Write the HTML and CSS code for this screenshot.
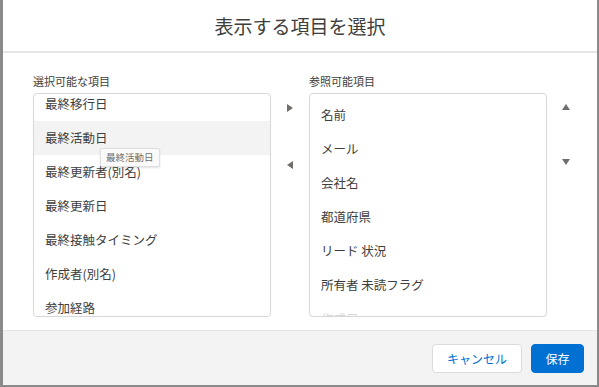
FILE: index.html
```html
<!DOCTYPE html>
<html lang="ja">
<head>
    <meta charset="UTF-8">
    <meta name="viewport" content="width=device-width, initial-scale=1.0">
    <title>表示する項目を選択</title>
    <link rel="stylesheet" href="styles.css">
</head>
<body>
    <div class="modal">
        <header class="modal-header">
            <h1>表示する項目を選択</h1>
        </header>

        <div class="modal-body">
            <div class="panel">
                <div class="panel-label">選択可能な項目</div>
                <div class="list-box">
                    <ul class="list list-scrolled">
                        <li>最終移行日</li>
                        <li class="hover">最終活動日</li>
                        <li>最終更新者(別名)</li>
                        <li>最終更新日</li>
                        <li>最終接触タイミング</li>
                        <li>作成者(別名)</li>
                        <li>参加経路</li>
                    </ul>
                </div>
                <div class="tooltip">最終活動日</div>
            </div>

            <div class="arrows">
                <svg width="8" height="10" viewBox="0 0 8 10"><path d="M1 1 L7 5 L1 9 Z" fill="#706e6b"/></svg>
                <svg width="8" height="10" viewBox="0 0 8 10"><path d="M7 1 L1 5 L7 9 Z" fill="#706e6b"/></svg>
            </div>

            <div class="panel">
                <div class="panel-label">参照可能項目</div>
                <div class="list-box">
                    <ul class="list list-top">
                        <li>名前</li>
                        <li>メール</li>
                        <li>会社名</li>
                        <li>都道府県</li>
                        <li>リード 状況</li>
                        <li>所有者 未読フラグ</li>
                        <li class="faint">作成日</li>
                    </ul>
                </div>
            </div>

            <div class="arrows">
                <svg width="10" height="8" viewBox="0 0 10 8"><path d="M1 7 L5 1 L9 7 Z" fill="#706e6b"/></svg>
                <svg width="10" height="8" viewBox="0 0 10 8"><path d="M1 1 L5 7 L9 1 Z" fill="#706e6b"/></svg>
            </div>
        </div>

        <footer class="modal-footer">
            <button class="btn btn-neutral">キャンセル</button>
            <button class="btn btn-brand">保存</button>
        </footer>
    </div>
</body>
</html>
```

FILE: styles.css
```css
body {
    margin: 0;
    padding: 0 3px 2px 3px;
    background-color: #8a8a8a;
    font-family: "Noto Sans CJK JP", "Noto Sans", sans-serif;
    color: #3e3e3c;
}
.modal {
    width: 594px;
    height: 385px;
    background-color: white;
    display: flex;
    flex-direction: column;
}
.modal-header {
    height: 51px;
    border-bottom: 2px solid #e5e5e5;
    display: flex;
    align-items: center;
    justify-content: center;
}
.modal-header h1 {
    margin: 0;
    font-size: 19px;
    font-weight: normal;
    color: #3e3e3c;
}
.modal-body {
    flex: 1;
    display: flex;
    padding: 21px 0 0 30px;
}
.panel {
    position: relative;
    width: 238px;
}
.panel-label {
    font-size: 11px;
    line-height: 14px;
    margin-bottom: 5px;
    color: #3e3e3c;
}
.list-box {
    height: 222px;
    border: 1px solid #d8d8d8;
    border-radius: 4px;
    overflow: hidden;
}
.list {
    list-style: none;
    margin: 0;
    padding: 0;
}
.list-scrolled {
    margin-top: -7px;
}
.list-top {
    padding-top: 4px;
}
.list li {
    height: 34px;
    line-height: 34px;
    padding-left: 11px;
    font-size: 12.5px;
    color: #3e3e3c;
    white-space: nowrap;
}
.list li.hover {
    background-color: #f3f3f3;
}
.list li.faint {
    color: #d8d8d8;
}
.tooltip {
    position: absolute;
    left: 67px;
    top: 74px;
    padding: 0 5px;
    height: 17px;
    line-height: 17px;
    font-size: 9.5px;
    color: #706e6b;
    background-color: #fafafa;
    border: 1px solid #e0e0e0;
    border-radius: 2px;
    box-shadow: 0 1px 2px rgba(0, 0, 0, 0.12);
}
.arrows {
    width: 38px;
    display: flex;
    flex-direction: column;
    align-items: center;
    gap: 47px;
    padding-top: 29px;
}
.modal-footer {
    height: 54px;
    background-color: #f3f3f3;
    border-top: 1px solid #e5e5e5;
    display: flex;
    align-items: center;
    justify-content: flex-end;
    gap: 9px;
    padding-right: 13px;
}
.btn {
    height: 29px;
    font-family: inherit;
    font-size: 12px;
    border-radius: 4px;
    cursor: pointer;
}
.btn-neutral {
    width: 90px;
    background-color: white;
    color: #0070d2;
    border: 1px solid #dddbda;
}
.btn-brand {
    width: 53px;
    background-color: #0070d2;
    color: white;
    border: 1px solid #0070d2;
}
```
